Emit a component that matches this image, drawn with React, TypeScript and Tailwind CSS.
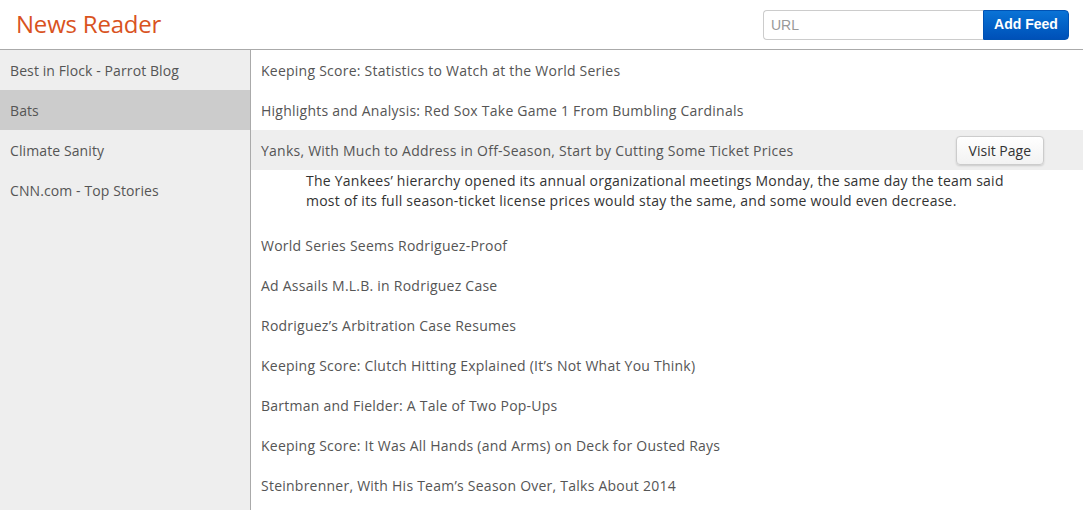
const feeds = ["Best in Flock - Parrot Blog", "Bats", "Climate Sanity", "CNN.com - Top Stories"];

const articles = [
  "Keeping Score: Statistics to Watch at the World Series",
  "Highlights and Analysis: Red Sox Take Game 1 From Bumbling Cardinals",
  "Yanks, With Much to Address in Off-Season, Start by Cutting Some Ticket Prices",
  "World Series Seems Rodriguez-Proof",
  "Ad Assails M.L.B. in Rodriguez Case",
  "Rodriguez\u2019s Arbitration Case Resumes",
  "Keeping Score: Clutch Hitting Explained (It\u2019s Not What You Think)",
  "Bartman and Fielder: A Tale of Two Pop-Ups",
  "Keeping Score: It Was All Hands (and Arms) on Deck for Ousted Rays",
  "Steinbrenner, With His Team\u2019s Season Over, Talks About 2014",
];

export default function App() {
  return (
    <div className="h-[510px] flex flex-col overflow-hidden bg-white font-['Open_Sans',sans-serif]">
      {/* Header */}
      <header className="h-[50px] shrink-0 flex items-center justify-between border-b border-[#aaaaaa] pl-[16px] pr-[14px]">
        <h1 className="text-[24px] leading-none text-[#d9531e] pb-[2px] tracking-[-0.2px]">News Reader</h1>
        <div className="flex items-center">
          <input
            placeholder="URL"
            className="w-[220px] h-[30px] rounded-l-[4px] border border-[#cccccc] border-r-0 px-[7px] text-[14px] placeholder-[#999999] outline-none font-['Liberation_Sans',sans-serif]"
          />
          <button className="h-[30px] w-[86px] rounded-r-[4px] bg-gradient-to-b from-[#0a73d6] to-[#0050b8] text-white text-[14px] font-bold font-['Liberation_Sans',sans-serif] border border-[#0052b3]">
            Add Feed
          </button>
        </div>
      </header>

      <div className="flex flex-1 min-h-0 tracking-[0.24px]">
        {/* Sidebar */}
        <nav className="w-[251px] shrink-0 bg-[#eeeeee] border-r border-[#aaaaaa] tracking-[0.1px]">
          {feeds.map((feed) => (
            <div
              key={feed}
              className={`h-[40px] flex items-center px-[10px] text-[14px] text-[#555555] ${
                feed === "Bats" ? "bg-[#cccccc]" : ""
              }`}
            >
              {feed}
            </div>
          ))}
        </nav>

        {/* Articles */}
        <main className="flex-1 min-w-0">
          {articles.map((title, i) => (
            <div key={title}>
              <div
                className={`h-[40px] flex items-center justify-between pl-[10px] pr-[39px] text-[14px] text-[#555555] ${
                  i === 2 ? "bg-[#eeeeee]" : ""
                }`}
              >
                <span>{title}</span>
                {i === 2 && (
                  <button className="h-[29px] px-[12px] rounded-[4px] border border-[#cccccc] bg-gradient-to-b from-white to-[#f2f2f2] shadow-[0_1px_2px_rgba(0,0,0,0.15)] text-[14px] text-[#333333] tracking-normal">
                    Visit Page
                  </button>
                )}
              </div>
              {i === 2 && (
                <p className="pl-[55px] w-[772px] pt-[1px] pb-[14px] text-[14px] leading-[20px] text-[#333333]">
                  The Yankees&rsquo; hierarchy opened its annual organizational meetings Monday, the same day the team said
                  most of its full season-ticket license prices would stay the same, and some would even decrease.
                </p>
              )}
            </div>
          ))}
        </main>
      </div>
    </div>
  );
}
